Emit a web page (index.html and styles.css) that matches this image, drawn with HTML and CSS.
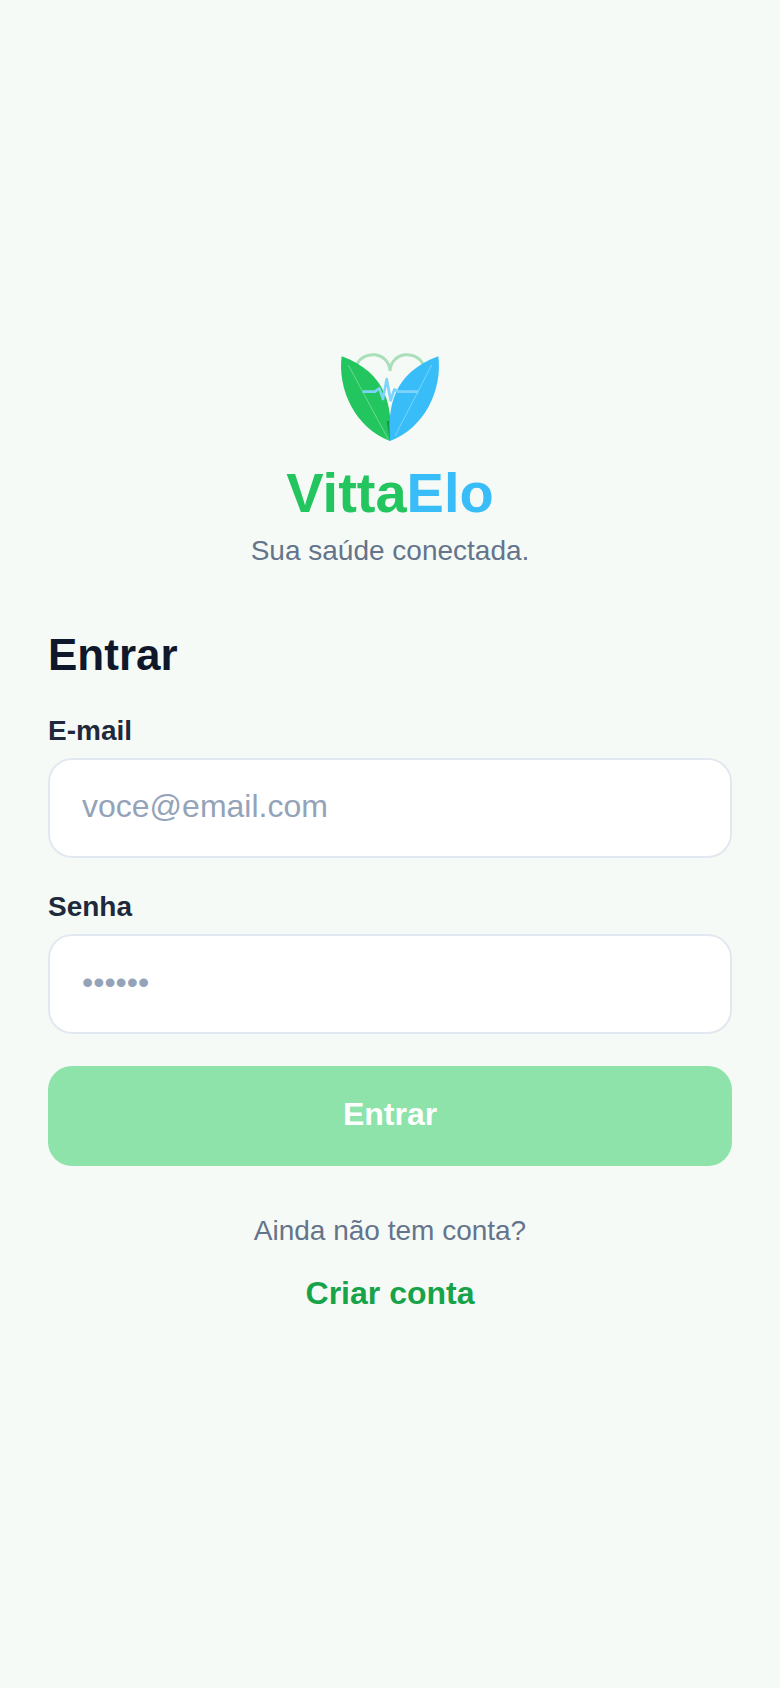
FILE: index.html
```html
<!DOCTYPE html>
<html lang="pt-BR">
<head>
<meta charset="utf-8">
<title>VittaElo</title>
<link rel="stylesheet" href="styles.css">
</head>
<body>
<main class="screen">
  <header class="brand">
    <svg class="logo" viewBox="0 0 420 330" aria-hidden="true">
      <path class="logo-arc" d="M112 68C132 28 205 30 210 90C215 30 288 28 308 68"/>
      <path class="logo-green" d="M65 46C52 145 106 262 210 300C218 200 202 96 65 46Z"/>
      <path class="logo-blue" d="M355 46C368 145 314 262 210 300C202 200 218 96 355 46Z"/>
      <path class="logo-vein" d="M85 72L205 295M335 72L225 285"/>
      <path class="logo-stem" d="M200 240L210 300L207 240Z"/>
      <path class="logo-pulse" d="M128 152H165L178 142L189 174L200 114L212 178L223 145L235 152H295"/>
    </svg>
    <h1 class="wordmark"><span class="wordmark-a">Vitta</span><span class="wordmark-b">Elo</span></h1>
    <p class="tagline">Sua saúde conectada.</p>
  </header>
  <form class="form">
    <h2 class="title">Entrar</h2>
    <label class="label" for="email">E-mail</label>
    <input class="input" id="email" type="email" placeholder="voce@email.com">
    <label class="label label-next" for="senha">Senha</label>
    <input class="input" id="senha" type="password" placeholder="••••••">
    <button class="submit" type="button">Entrar</button>
  </form>
  <p class="hint">Ainda não tem conta?</p>
  <a class="link" href="#">Criar conta</a>
</main>
</body>
</html>
```
FILE: styles.css
```css
* { box-sizing: border-box; }
html, body { margin: 0; height: 100%; }
body {
  background: #f6faf7;
  font-family: "Liberation Sans", Arial, sans-serif;
}
.screen {
  min-height: 1688px;
  display: flex;
  flex-direction: column;
  justify-content: center;
  padding: 0 48px 32px;
}
.brand {
  display: flex;
  flex-direction: column;
  align-items: center;
  margin-bottom: 56px;
}
.logo { width: 140px; height: 110px; display: block; margin-bottom: 10px; }
.logo-arc { fill: none; stroke: #aadfba; stroke-width: 9; stroke-linecap: round; }
.logo-green { fill: #22c55e; }
.logo-blue { fill: #38bdf8; }
.logo-vein { fill: none; stroke: #fff; stroke-opacity: .5; stroke-width: 2; }
.logo-stem { fill: #15803d; fill-opacity: .7; }
.logo-pulse { fill: none; stroke: #7dd3fc; stroke-width: 8; stroke-linejoin: round; }
.wordmark { margin: 0; font-size: 56px; line-height: 64px; font-weight: 700; }
.wordmark-a { color: #22c55e; }
.wordmark-b { color: #38bdf8; }
.tagline { margin: 6px 0 0; font-size: 28px; line-height: 40px; color: #64748b; }
.form { display: flex; flex-direction: column; }
.title { margin: 0 0 32px; font-size: 44px; line-height: 56px; font-weight: 700; color: #0f172a; }
.label { font-size: 28px; line-height: 32px; font-weight: 700; color: #1e293b; margin-bottom: 11px; }
.label-next { margin-top: 33px; }
.input {
  height: 100px;
  padding: 0 32px 4px;
  border: 2px solid #e2e8f0;
  border-radius: 24px;
  background: #fff;
  font: 32px "Liberation Sans", Arial, sans-serif;
  color: #0f172a;
  outline: none;
}
.input::placeholder { color: #94a3b8; opacity: 1; }
.submit {
  height: 100px;
  margin-top: 32px;
  padding: 0 0 4px;
  border: 0;
  border-radius: 24px;
  background: #8de3a9;
  color: #fff;
  font: 700 32px "Liberation Sans", Arial, sans-serif;
}
.hint { margin: 45px 0 0; text-align: center; font-size: 28px; line-height: 40px; color: #64748b; }
.link { margin-top: 20px; text-align: center; font-size: 32px; line-height: 44px; font-weight: 700; color: #16a34a; text-decoration: none; }
```
